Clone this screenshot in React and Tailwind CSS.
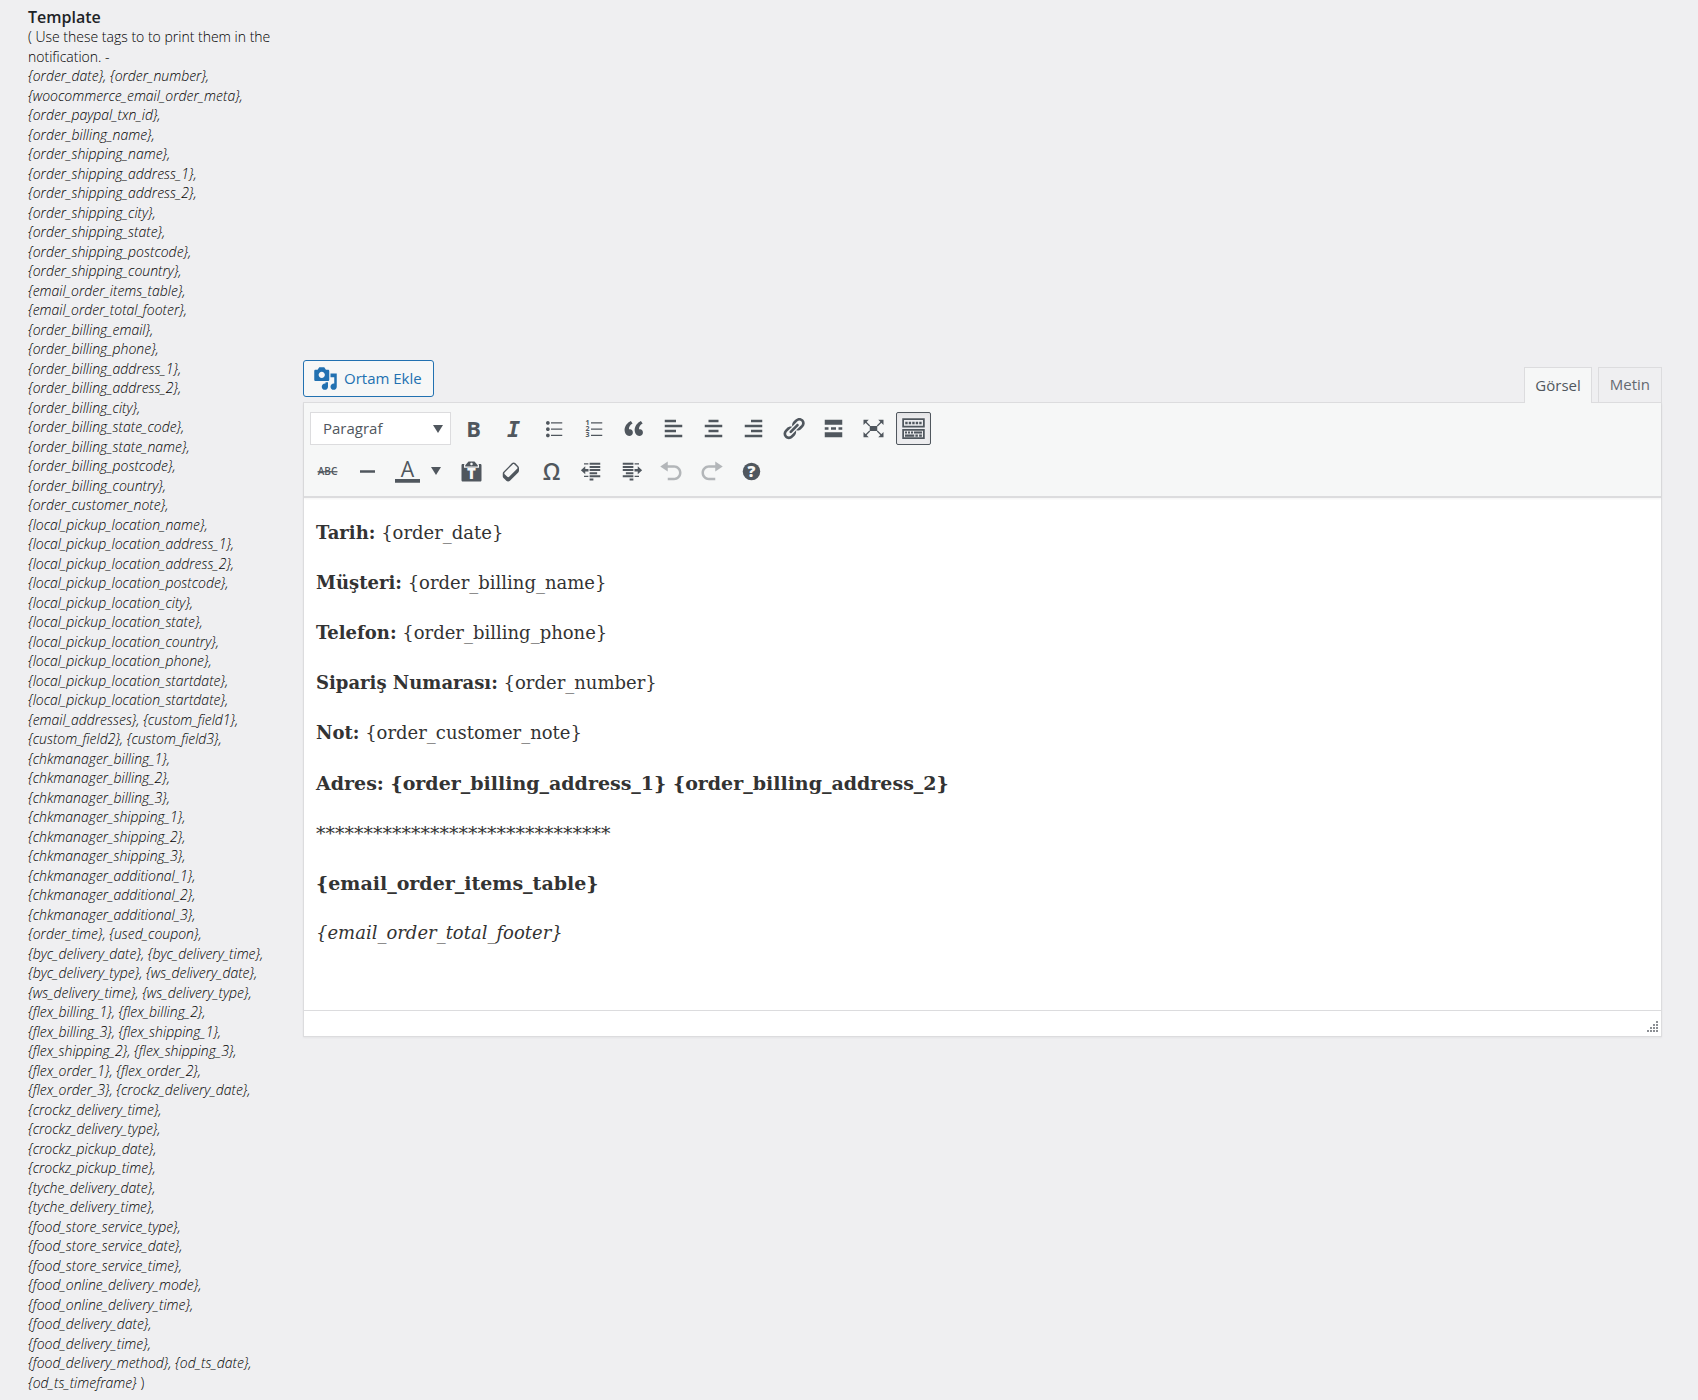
import React, { useState } from 'react';
import clsx from 'clsx';

const tagLines = [
  '{order_date}, {order_number},',
  '{woocommerce_email_order_meta},',
  '{order_paypal_txn_id},',
  '{order_billing_name},',
  '{order_shipping_name},',
  '{order_shipping_address_1},',
  '{order_shipping_address_2},',
  '{order_shipping_city},',
  '{order_shipping_state},',
  '{order_shipping_postcode},',
  '{order_shipping_country},',
  '{email_order_items_table},',
  '{email_order_total_footer},',
  '{order_billing_email},',
  '{order_billing_phone},',
  '{order_billing_address_1},',
  '{order_billing_address_2},',
  '{order_billing_city},',
  '{order_billing_state_code},',
  '{order_billing_state_name},',
  '{order_billing_postcode},',
  '{order_billing_country},',
  '{order_customer_note},',
  '{local_pickup_location_name},',
  '{local_pickup_location_address_1},',
  '{local_pickup_location_address_2},',
  '{local_pickup_location_postcode},',
  '{local_pickup_location_city},',
  '{local_pickup_location_state},',
  '{local_pickup_location_country},',
  '{local_pickup_location_phone},',
  '{local_pickup_location_startdate},',
  '{local_pickup_location_startdate},',
  '{email_addresses}, {custom_field1},',
  '{custom_field2}, {custom_field3},',
  '{chkmanager_billing_1},',
  '{chkmanager_billing_2},',
  '{chkmanager_billing_3},',
  '{chkmanager_shipping_1},',
  '{chkmanager_shipping_2},',
  '{chkmanager_shipping_3},',
  '{chkmanager_additional_1},',
  '{chkmanager_additional_2},',
  '{chkmanager_additional_3},',
  '{order_time}, {used_coupon},',
  '{byc_delivery_date}, {byc_delivery_time},',
  '{byc_delivery_type}, {ws_delivery_date},',
  '{ws_delivery_time}, {ws_delivery_type},',
  '{flex_billing_1}, {flex_billing_2},',
  '{flex_billing_3}, {flex_shipping_1},',
  '{flex_shipping_2}, {flex_shipping_3},',
  '{flex_order_1}, {flex_order_2},',
  '{flex_order_3}, {crockz_delivery_date},',
  '{crockz_delivery_time},',
  '{crockz_delivery_type},',
  '{crockz_pickup_date},',
  '{crockz_pickup_time},',
  '{tyche_delivery_date},',
  '{tyche_delivery_time},',
  '{food_store_service_type},',
  '{food_store_service_date},',
  '{food_store_service_time},',
  '{food_online_delivery_mode},',
  '{food_online_delivery_time},',
  '{food_delivery_date},',
  '{food_delivery_time},',
  '{food_delivery_method}, {od_ts_date},',
];

const Icon = ({ children }) => (
  <svg viewBox="0 0 20 20" className="size-[25px] overflow-visible" fill="currentColor" aria-hidden="true">
    {children}
  </svg>
);

const icons = {
  media: (
    <path d="M13 11V4c0-.55-.45-1-1-1h-1.67L9 1H5L3.67 3H2c-.55 0-1 .45-1 1v7c0 .55.45 1 1 1h10c.55 0 1-.45 1-1zM7 4.5c1.38 0 2.5 1.12 2.5 2.5S8.38 9.5 7 9.5 4.5 8.38 4.5 7 5.62 4.5 7 4.5zM14 6h5v10.5c0 1.38-1.12 2.5-2.5 2.5S14 17.88 14 16.5s1.12-2.5 2.5-2.5c.17 0 .34.02.5.05V9h-3V6zm-4 8.05V13h2v3.5c0 1.38-1.12 2.5-2.5 2.5S7 17.88 7 16.5 8.12 14 9.5 14c.17 0 .34.02.5.05z" />
  ),
  bold: (
    <text x="10" y="16.4" textAnchor="middle" fontSize="17.5" fontWeight="700" fontFamily="Open Sans, sans-serif">B</text>
  ),
  italic: (
    <text x="10" y="16.4" textAnchor="middle" fontSize="17.5" fontWeight="700" fontStyle="italic" fontFamily="DejaVu Sans Mono, monospace">I</text>
  ),
  bullist: (
    <path d="M5.5 7C4.67 7 4 6.33 4 5.5 4 4.68 4.67 4 5.5 4 6.32 4 7 4.68 7 5.5 7 6.33 6.32 7 5.5 7zM8 5h9v1H8V5zm-2.5 7c-.83 0-1.5-.67-1.5-1.5C4 9.68 4.67 9 5.5 9c.82 0 1.5.68 1.5 1.5 0 .83-.68 1.5-1.5 1.5zM8 10h9v1H8v-1zm-2.5 7c-.83 0-1.5-.67-1.5-1.5 0-.82.67-1.5 1.5-1.5.82 0 1.5.68 1.5 1.5 0 .83-.68 1.5-1.5 1.5zM8 15h9v1H8v-1z" />
  ),
  numlist: (
    <>
      <g fontSize="5.6" fontWeight="700" fontFamily="Open Sans, sans-serif">
        <text x="3.6" y="7">1</text>
        <text x="3.6" y="12">2</text>
        <text x="3.6" y="17">3</text>
      </g>
      <path d="M8 5h9v1H8zM8 10h9v1H8zM8 15h9v1H8z" />
    </>
  ),
  quote: (
    <path d="M9.49 13.22c0-.74-.2-1.38-.61-1.9-.62-.78-1.83-.88-2.53-.72-.29-1.65 1.11-3.75 2.92-4.65L7.88 4c-2.73 1.3-5.42 4.28-4.96 8.05C3.21 14.43 4.59 16 6.54 16c.85 0 1.56-.25 2.12-.75s.83-1.18.83-2.03zm8.05 0c0-.74-.2-1.38-.61-1.9-.63-.78-1.83-.88-2.53-.72-.29-1.65 1.11-3.75 2.92-4.65L15.93 4c-2.73 1.3-5.41 4.28-4.95 8.05.29 2.38 1.66 3.95 3.61 3.95.85 0 1.56-.25 2.12-.75s.83-1.18.83-2.03z" />
  ),
  left: <path d="M12 5V3H3v2h9zm5 4V7H3v2h14zm-5 4v-2H3v2h9zm5 4v-2H3v2h14z" />,
  center: <path d="M14 5V3H6v2h8zm3 4V7H3v2h14zm-3 4v-2H6v2h8zm3 4v-2H3v2h14z" />,
  right: <path d="M17 5V3H8v2h9zm0 4V7H3v2h14zm0 4v-2H8v2h9zm0 4v-2H3v2h14z" />,
  link: (
    <path d="M17.74 2.76c1.68 1.69 1.68 4.41 0 6.1l-1.53 1.52c-1.12 1.12-2.7 1.47-4.14 1.09l2.62-2.61.76-.77.76-.76c.84-.84.84-2.2 0-3.04-.84-.85-2.2-.85-3.04 0l-.77.76-3.38 3.38c-.37-1.44-.02-3.02 1.1-4.14l1.52-1.53c1.69-1.68 4.42-1.68 6.1 0zM8.59 13.43l5.34-5.34c.42-.42.42-1.1 0-1.52-.44-.43-1.13-.39-1.53 0l-5.33 5.34c-.42.42-.42 1.1 0 1.52.44.43 1.13.39 1.52 0zm-.76 2.29l4.14-4.15c.38 1.44.03 3.02-1.09 4.14l-1.52 1.53c-1.69 1.68-4.41 1.68-6.1 0-1.68-1.68-1.68-4.42 0-6.1l1.53-1.52c1.12-1.12 2.7-1.47 4.14-1.1l-4.14 4.15c-.85.84-.85 2.2 0 3.05.84.84 2.2.84 3.04 0z" />
  ),
  more: <path d="M17 7V3H3v4h14zM6 11V9H3v2h3zm6 0V9H8v2h4zm5 0V9h-3v2h3zm0 6v-4H3v4h14z" />,
  fullscreen: (
    <>
      <path d="M7 8h6v4H7zM2 3h4.200L2 7.200zM18 3v4.200L13.800 3zM2 17v-4.200L6.200 17zM18 17h-4.200l4.200-4.200z" />
      <path d="M3 4l4 4M17 4l-4 4M3 16l4-4M17 16l-4-4" stroke="currentColor" strokeWidth="1" />
    </>
  ),
  kitchen: (
    <path
      fillRule="evenodd"
      d="M1 1.800h18v7.400H1zM2.400 3.200v4.600h15.200V3.200zM1 10.400h18v8H1zM2.400 11.800v5.200h15.200v-5.200zM3.400 4.600h1.900v1.900H3.400zM6.200 4.600h1.900v1.900H6.200zM9 4.600h1.900v1.900H9zM11.800 4.600h1.900v1.900h-1.900zM14.600 4.600h1.900v1.900h-1.900zM3.200 12.400h1.600v1.600H3.200zM5.600 12.400h1.600v1.600H5.600zM8 12.400h1.600v1.600H8zM10.400 12.400h6.400v1.600h-6.400zM3.200 14.800h7.400v1.700H3.200zM11.500 14.800h2v1.700h-2zM14.500 14.800h2.200v1.700h-2.200z"
    />
  ),
  strike: (
    <>
      <text x="10" y="13" textAnchor="middle" fontSize="8" fontWeight="600" fontFamily="Open Sans, sans-serif">ABC</text>
      <path d="M2 9.700h16v1H2z" />
    </>
  ),
  hr: <path d="M4 9h12v2H4z" />,
  color: (
    <>
      <text x="10" y="14" textAnchor="middle" fontSize="17" fontWeight="500" fontFamily="Open Sans, sans-serif">A</text>
      <path d="M0 16h20v3H0z" />
    </>
  ),
  paste: (
    <>
      <path d="M12.380 2L15 5v1H5V5l2.640-3h4.740zM10 5c.55 0 1-.44 1-1 0-.55-.45-1-1-1s-1 .45-1 1c0 .56.45 1 1 1zm5.450-1H17c.55 0 1 .45 1 1v12c0 .56-.45 1-1 1H3c-.55 0-1-.44-1-1V5c0-.55.45-1 1-1h1.550L4 4.630V7h12V4.630z" />
      <text x="10" y="16.200" textAnchor="middle" fontSize="12" fontWeight="800" fill="#f6f7f7" fontFamily="Open Sans, sans-serif">T</text>
    </>
  ),
  eraser: (
    <path d="M14.29 4.59l1.1 1.11c.41.4.61.94.61 1.47v2.12c0 .53-.2 1.07-.61 1.47l-6.63 6.63c-.4.41-.94.61-1.47.61s-1.07-.2-1.47-.61l-1.11-1.1-1.1-1.11c-.41-.4-.61-.94-.61-1.47v-2.12c0-.54.2-1.07.61-1.48l6.63-6.62c.4-.41.94-.61 1.47-.61s1.06.2 1.47.61zm-6.21 9.7l6.42-6.42c.39-.39.39-1.03 0-1.43L12.36 4.3c-.19-.19-.45-.29-.72-.29s-.52.1-.71.29l-6.42 6.42c-.39.4-.39 1.04 0 1.43l2.14 2.14c.38.38 1.04.38 1.43 0z" />
  ),
  omega: (
    <text x="10" y="16.500" textAnchor="middle" fontSize="18" fontWeight="600" fontFamily="Open Sans, sans-serif">Ω</text>
  ),
  outdent: (
    <path d="M4 3.300h3.500v1H4zM8.500 3h8.500v1.600H8.500zM8.500 5.500h8.500v1.600H8.500zM8.500 8h8.500v1.600H8.500zM8.500 10.500h6v1.600h-6zM8.500 13h8.500v1.600H8.500zM4 13.300h3.500v1H4zM8.500 15.600h3v1.600h-3zM1.500 9L5 5.800v2.200h2.600v2H5v2.200z" />
  ),
  indent: (
    <path d="M12.500 3.300h3.500v1h-3.500zM3 3h8.500v1.600H3zM3 5.500h8.500v1.600H3zM3 8h8.500v1.600H3zM5.500 10.500h6v1.600h-6zM3 13h8.500v1.600H3zM12.500 13.300h3.500v1h-3.500zM8.500 15.600h3v1.600h-3zM18.500 9L15 5.800v2.200h-2.600v2H15v2.200z" />
  ),
  undo: <path d="M12 5H7V2L1 6l6 4V7h5c2.200 0 4 1.800 4 4s-1.800 4-4 4H7v2h5c3.300 0 6-2.700 6-6s-2.700-6-6-6z" />,
  redo: <path d="M8 5h5V2l6 4-6 4V7H8c-2.200 0-4 1.800-4 4s1.800 4 4 4h5v2H8c-3.300 0-6-2.700-6-6s2.700-6 6-6z" />,
  help: (
    <>
      <circle cx="10" cy="10" r="7" />
      <text x="10" y="14.500" textAnchor="middle" fontSize="12.500" fontWeight="800" fill="#f6f7f7" fontFamily="Open Sans, sans-serif">?</text>
    </>
  ),
};

const firstRow = [
  ['bold', 'Kalın'],
  ['italic', 'İtalik'],
  ['bullist', 'Madde imli liste'],
  ['numlist', 'Numaralı liste'],
  ['quote', 'Alıntı'],
  ['left', 'Sola hizala'],
  ['center', 'Ortala'],
  ['right', 'Sağa hizala'],
  ['link', 'Bağlantı ekle'],
  ['more', 'Devamını oku etiketi'],
  ['fullscreen', 'Tam ekran'],
];

const secondRow = [
  ['paste', 'Metin olarak yapıştır'],
  ['eraser', 'Biçimlendirmeyi temizle'],
  ['omega', 'Özel karakter'],
  ['outdent', 'Girintiyi azalt'],
  ['indent', 'Girintiyi arttır'],
  ['undo', 'Geri al'],
  ['redo', 'Yinele'],
  ['help', 'Klavye kısayolları'],
];

const ToolButton = ({ name, label, disabled, pressed, onClick }) => (
  <button
    type="button"
    aria-label={label}
    aria-pressed={pressed}
    disabled={disabled}
    onClick={onClick}
    className={clsx(
      'flex h-[33px] w-[35px] shrink-0 items-center justify-center rounded-xs border',
      pressed ? 'border-[#50575e] bg-[#ededef] shadow-inner' : 'border-transparent',
      disabled && 'opacity-40'
    )}
  >
    <Icon>{icons[name]}</Icon>
  </button>
);

const Caret = () => (
  <svg viewBox="0 0 10 8" className="h-2 w-[10px]" fill="currentColor" aria-hidden="true">
    <path d="M0 0h10L5 8z" />
  </svg>
);

const Toolbar = () => {
  const [expanded, setExpanded] = useState(true);

  return (
    <div className="flex flex-col gap-[10px] border-b-2 border-[#dcdcde] bg-[#f6f7f7] px-1.5 pt-[9px] pb-2 text-[#50575e] shadow-xs">
      <div className="flex flex-wrap gap-[5px]">
        <div className="relative">
          <select
            aria-label="Biçim"
            className="h-[33px] w-[141px] appearance-none border border-[#dcdcde] bg-white pl-3 text-[15px]"
          >
            <option>Paragraf</option>
          </select>
          <span className="pointer-events-none absolute top-[13px] right-2">
            <Caret />
          </span>
        </div>
        {firstRow.map(([name, label]) => (
          <ToolButton key={name} name={name} label={label} />
        ))}
        <ToolButton name="kitchen" label="Araç çubuğu" pressed={expanded} onClick={() => setExpanded(!expanded)} />
      </div>
      {expanded && (
        <div className="flex flex-wrap gap-[5px]">
          <ToolButton name="strike" label="Üstü çizili" />
          <ToolButton name="hr" label="Yatay çizgi" />
          <div className="flex w-[59px]">
            <ToolButton name="color" label="Metin rengi" />
            <button type="button" aria-label="Renk seç" className="flex flex-1 items-center justify-center pr-0.5">
              <Caret />
            </button>
          </div>
          {secondRow.map(([name, label]) => (
            <ToolButton key={name} name={name} label={label} disabled={name === 'undo' || name === 'redo'} />
          ))}
        </div>
      )}
    </div>
  );
};

const Editor = () => {
  const [tab, setTab] = useState('visual');

  return (
    <div className="min-w-0 flex-1">
      <div className="flex items-start justify-between">
        <button
          type="button"
          className="flex h-[37px] items-center gap-1.5 rounded-[3px] border border-[#2271b1] bg-[#f6f7f7] pr-[11px] pl-[9px] text-[15px] text-[#2271b1]"
        >
          <Icon>{icons.media}</Icon>
          Ortam Ekle
        </button>
        <div className="relative z-10 mt-[7px] flex gap-1.5 text-[15px]">
          <button
            type="button"
            onClick={() => setTab('visual')}
            className={clsx(
              'h-9 border border-b-0 border-[#dcdcde] px-[10px]',
              tab === 'visual' ? 'bg-[#f6f7f7] text-[#50575e]' : 'bg-[#efeff1] text-[#646970]'
            )}
          >
            Görsel
          </button>
          <button
            type="button"
            onClick={() => setTab('text')}
            className={clsx(
              'h-9 border border-[#dcdcde] px-[11px]',
              tab === 'text' ? 'bg-[#f6f7f7] text-[#50575e]' : 'bg-[#efeff1] text-[#646970]'
            )}
          >
            Metin
          </button>
        </div>
      </div>

      <div className="-mt-px border border-[#dcdcde] bg-white shadow-xs">
        <Toolbar />
        <div
          role="textbox"
          aria-label="Template"
          contentEditable
          suppressContentEditableWarning
          className="min-h-[512px] space-y-5 px-3 pt-5 font-['DejaVu_Serif',Georgia,serif] text-[18px] leading-[30px] text-[#333]"
        >
          <p><strong>Tarih:</strong> {'{order_date}'}</p>
          <p><strong>Müşteri:</strong> {'{order_billing_name}'}</p>
          <p><strong>Telefon:</strong> {'{order_billing_phone}'}</p>
          <p><strong>Sipariş Numarası:</strong> {'{order_number}'}</p>
          <p><strong>Not:</strong> {'{order_customer_note}'}</p>
          <p className="text-[19px]"><strong>Adres: {'{order_billing_address_1} {order_billing_address_2}'}</strong></p>
          <p className="text-[19px]">*******************************</p>
          <p className="text-[19px]"><strong>{'{email_order_items_table}'}</strong></p>
          <p><em>{'{email_order_total_footer}'}</em></p>
        </div>
        <div className="flex h-[26px] items-end justify-end border-t border-[#dcdcde] p-0.5 text-[#8c8f94]">
          <svg viewBox="0 0 13 13" className="size-[13px]" fill="currentColor" aria-hidden="true">
            <path d="M10 0h2v2h-2zM7 3h2v2H7zM10 3h2v2h-2zM4 6h2v2H4zM7 6h2v2H7zM10 6h2v2h-2zM1 9h2v2H1zM4 9h2v2H4zM7 9h2v2H7zM10 9h2v2h-2z" />
          </svg>
        </div>
      </div>
    </div>
  );
};

const App = () => {
  return (
    <div className="flex min-h-screen items-center bg-[#efeff1] pr-9 pb-1 pl-7 font-['Segoe_UI','Open_Sans',sans-serif]">
      <div className="w-[275px] shrink-0 self-start pt-[7px] text-[14px] leading-[1.393] font-light text-black">
        <h2 className="text-[16px] leading-5 font-semibold text-[#1d2327]">Template</h2>
        <p>( Use these tags to to print them in the</p>
        <p>notification. -</p>
        {tagLines.map((line, i) => (
          <p key={i} className="italic">{line}</p>
        ))}
        <p><i>{'{od_ts_timeframe}'}</i> )</p>
      </div>
      <Editor />
    </div>
  );
};

export default App;
